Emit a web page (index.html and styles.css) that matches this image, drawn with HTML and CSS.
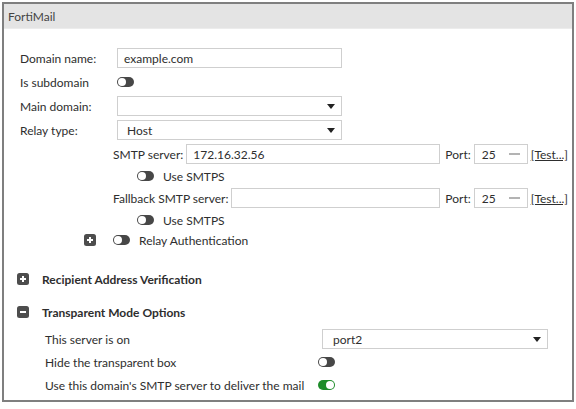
FILE: index.html
```html
<!DOCTYPE html>
<html>
<head>
<meta charset="utf-8">
<link rel="stylesheet" href="styles.css">
</head>
<body>
<div class="panel">
  <div class="panel-head">FortiMail</div>
  <div class="panel-body">
    <div class="form">
      <div class="row">
        <span class="label">Domain name:</span>
        <div class="field text wide">example.com</div>
      </div>
      <div class="row">
        <span class="label">Is subdomain</span>
        <span class="toggle"></span>
      </div>
      <div class="row">
        <span class="label">Main domain:</span>
        <div class="field select wide"><span></span><i class="caret"></i></div>
      </div>
      <div class="row">
        <span class="label">Relay type:</span>
        <div class="field select wide"><span class="sel-text">Host</span><i class="caret"></i></div>
      </div>
      <div class="sub">
        <div class="row">
          <span class="sublabel">SMTP server:</span>
          <div class="field text grow">172.16.32.56</div>
          <span class="port-label">Port:</span>
          <div class="field port"><span>25</span><i class="spin"></i></div>
          <a class="test">[Test...]</a>
        </div>
        <div class="row short opt">
          <span class="toggle"></span>
          <span>Use SMTPS</span>
        </div>
        <div class="row">
          <span class="sublabel">Fallback SMTP server:</span>
          <div class="field text grow"></div>
          <span class="port-label">Port:</span>
          <div class="field port"><span>25</span><i class="spin"></i></div>
          <a class="test">[Test...]</a>
        </div>
        <div class="row short opt">
          <span class="toggle"></span>
          <span>Use SMTPS</span>
        </div>
      </div>
      <div class="row short auth">
        <svg class="box-icon" width="12" height="12" viewBox="0 0 12 12"><rect x="0" y="0" width="12" height="12" rx="2.5" fill="#4d4d4d"/><path d="M6 3v6M3 6h6" stroke="#fff" stroke-width="2"/></svg>
        <span class="toggle"></span>
        <span>Relay Authentication</span>
      </div>
    </div>

    <div class="section first">
      <svg class="box-icon" width="12" height="12" viewBox="0 0 12 12"><rect x="0" y="0" width="12" height="12" rx="2.5" fill="#4d4d4d"/><path d="M6 3v6M3 6h6" stroke="#fff" stroke-width="2"/></svg>
      <span class="sec-title">Recipient Address Verification</span>
    </div>
    <div class="section">
      <svg class="box-icon" width="12" height="12" viewBox="0 0 12 12"><rect x="0" y="0" width="12" height="12" rx="2.5" fill="#4d4d4d"/><path d="M3 6h6" stroke="#fff" stroke-width="2"/></svg>
      <span class="sec-title">Transparent Mode Options</span>
    </div>
    <div class="tm">
      <div class="row">
        <span class="tm-label">This server is on</span>
        <div class="field select tm-select"><span class="sel-text">port2</span><i class="caret"></i></div>
      </div>
      <div class="row">
        <span class="tm-label">Hide the transparent box</span>
        <span class="toggle tm-toggle"></span>
      </div>
      <div class="row">
        <span class="tm-label">Use this domain's SMTP server to deliver the mail</span>
        <span class="toggle on tm-toggle"></span>
      </div>
    </div>
  </div>
</div>
</body>
</html>
```

FILE: styles.css
```css
html, body {
  margin: 0;
  padding: 0;
  background: #fff;
}
body {
  font-family: Lato, "Open Sans", "Liberation Sans", sans-serif;
  font-size: 12px;
  color: #2e2e2e;
}
.panel {
  margin: 2px 2px 0 2px;
  width: 568px;
  height: 396px;
  border: 2px solid #7f7f7f;
  display: flex;
  flex-direction: column;
}
.panel-head {
  height: 25px;
  background: #e4e4e4;
  padding-left: 4px;
  display: flex;
  align-items: center;
  color: #444;
  border-bottom: 1px solid #ececec;
  box-sizing: border-box;
}
.panel-body {
  padding-top: 19px;
}
.form {
  padding-left: 16px;
  display: flex;
  flex-direction: column;
  gap: 4px;
}
.row {
  height: 20px;
  display: flex;
  align-items: center;
}
.row.short {
  height: 16px;
}
.label {
  width: 97px;
  flex: none;
}
.field {
  height: 20px;
  box-sizing: border-box;
  border: 1px solid #cfcfcf;
  background: #fff;
  display: flex;
  align-items: center;
  color: #2e2e2e;
}
.text {
  padding-left: 6px;
}
.wide {
  width: 225px;
}
.select {
  justify-content: space-between;
  padding: 0 6px 0 9px;
}
.caret {
  width: 0;
  height: 0;
  border-left: 4px solid transparent;
  border-right: 4px solid transparent;
  border-top: 5px solid #222;
}
.toggle {
  width: 17px;
  height: 10px;
  border-radius: 5px;
  background: #474747;
  position: relative;
  flex: none;
}
.toggle::before {
  content: "";
  position: absolute;
  left: 1px;
  top: 1px;
  width: 8px;
  height: 8px;
  border-radius: 50%;
  background: #fff;
}
.toggle.on {
  background: #1e8c2a;
}
.toggle.on::before {
  left: 8px;
}
.sub {
  margin-left: 93px;
  width: 455px;
  display: flex;
  flex-direction: column;
  gap: 4px;
}
.sublabel {
  margin-right: 3px;
  flex: none;
}
.grow {
  flex: 1;
}
.port-label {
  margin-left: 5px;
  margin-right: 3px;
}
.port {
  width: 54px;
  padding: 0 7px;
  justify-content: space-between;
}
.spin {
  width: 11px;
  height: 2px;
  background: #b3b3b3;
}
.test {
  margin-left: 3px;
  text-decoration: underline;
  color: #2e2e2e;
}
.opt {
  padding-left: 24px;
  gap: 9px;
}
.auth {
  padding-left: 64px;
}
.auth .toggle {
  margin-left: 17px;
  margin-right: 9px;
}
.box-icon {
  flex: none;
  display: block;
}
.section {
  height: 20px;
  display: flex;
  align-items: center;
  padding-left: 13px;
  margin-top: 13px;
}
.section.first {
  margin-top: 21px;
}
.sec-title {
  font-weight: bold;
  margin-left: 13px;
}
.tm {
  margin-top: 7px;
  padding-left: 41px;
  display: flex;
  flex-direction: column;
  gap: 3px;
}
.tm-label {
  width: 277px;
  flex: none;
}
.tm-select {
  width: 226px;
  padding-left: 10px;
}
.tm-toggle {
  margin-left: -4px;
}
```
